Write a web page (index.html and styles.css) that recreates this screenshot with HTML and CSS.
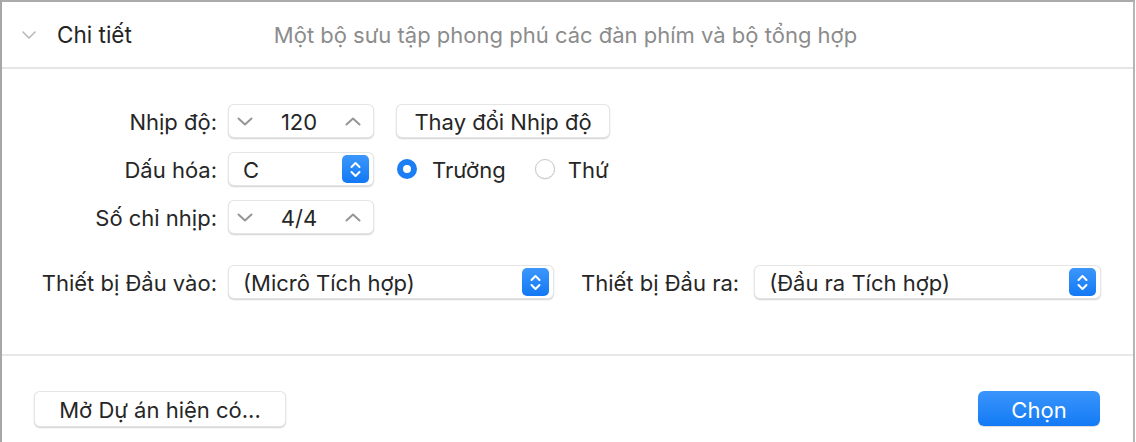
FILE: index.html
```html
<!DOCTYPE html>
<html lang="vi">
<head>
<meta charset="utf-8">
<link rel="stylesheet" href="styles.css">
</head>
<body>
<div class="window">
  <header class="header">
    <svg class="disclosure" width="14" height="8" viewBox="0 0 14 8"><path d="M1 1 L7 7 L13 1" fill="none" stroke="#b9b9b9" stroke-width="1.6" stroke-linecap="round" stroke-linejoin="round"/></svg>
    <span class="title">Chi tiết</span>
    <span class="desc">Một bộ sưu tập phong phú các đàn phím và bộ tổng hợp</span>
  </header>

  <section class="form">
    <div class="row">
      <label class="lbl">Nhịp độ:</label>
      <div class="stepper">
        <svg class="chev" width="16" height="9" viewBox="0 0 16 9"><path d="M1.5 1.5 L8 7.5 L14.5 1.5" fill="none" stroke="#959595" stroke-width="2" stroke-linecap="round" stroke-linejoin="round"/></svg>
        <span class="val">120</span>
        <svg class="chev" width="16" height="9" viewBox="0 0 16 9"><path d="M1.5 7.5 L8 1.5 L14.5 7.5" fill="none" stroke="#959595" stroke-width="2" stroke-linecap="round" stroke-linejoin="round"/></svg>
      </div>
      <button class="btn tempo">Thay đổi Nhịp độ</button>
    </div>

    <div class="row">
      <label class="lbl">Dấu hóa:</label>
      <div class="popup key">
        <span class="ptext">C</span>
        <span class="arrows"><svg width="11" height="17" viewBox="0 0 11 17"><path d="M1.5 6 L5.5 2 L9.5 6 M1.5 11 L5.5 15 L9.5 11" fill="none" stroke="#fff" stroke-width="2" stroke-linecap="round" stroke-linejoin="round"/></svg></span>
      </div>
      <div class="radios">
        <span class="radio on"></span><span class="rtext">Trưởng</span>
        <span class="radio off"></span><span class="rtext">Thứ</span>
      </div>
    </div>

    <div class="row">
      <label class="lbl">Số chỉ nhịp:</label>
      <div class="stepper">
        <svg class="chev" width="16" height="9" viewBox="0 0 16 9"><path d="M1.5 1.5 L8 7.5 L14.5 1.5" fill="none" stroke="#959595" stroke-width="2" stroke-linecap="round" stroke-linejoin="round"/></svg>
        <span class="val">4/4</span>
        <svg class="chev" width="16" height="9" viewBox="0 0 16 9"><path d="M1.5 7.5 L8 1.5 L14.5 7.5" fill="none" stroke="#959595" stroke-width="2" stroke-linecap="round" stroke-linejoin="round"/></svg>
      </div>
    </div>

    <div class="row devices">
      <label class="lbl">Thiết bị Đầu vào:</label>
      <div class="popup input">
        <span class="ptext">(Micrô Tích hợp)</span>
        <span class="arrows"><svg width="11" height="17" viewBox="0 0 11 17"><path d="M1.5 6 L5.5 2 L9.5 6 M1.5 11 L5.5 15 L9.5 11" fill="none" stroke="#fff" stroke-width="2" stroke-linecap="round" stroke-linejoin="round"/></svg></span>
      </div>
      <label class="lbl2">Thiết bị Đầu ra:</label>
      <div class="popup output">
        <span class="ptext">(Đầu ra Tích hợp)</span>
        <span class="arrows"><svg width="11" height="17" viewBox="0 0 11 17"><path d="M1.5 6 L5.5 2 L9.5 6 M1.5 11 L5.5 15 L9.5 11" fill="none" stroke="#fff" stroke-width="2" stroke-linecap="round" stroke-linejoin="round"/></svg></span>
      </div>
    </div>
  </section>

  <footer class="footer">
    <button class="btn open">Mở Dự án hiện có...</button>
    <button class="btn primary">Chọn</button>
  </footer>
</div>
</body>
</html>
```

FILE: styles.css
```css
* { box-sizing: border-box; }
html, body { margin: 0; padding: 0; background: #fff; }
body {
  font-family: Inter, "Noto Sans", "Liberation Sans", sans-serif;
  font-size: 22px;
  color: #262626;
}
.window {
  width: 1135px;
  height: 442px;
  border-top: 2px solid #ababab;
  border-left: 2px solid #a6a6a6;
  border-right: 2px solid #b5b5b5;
  background: #fff;
}
.header {
  height: 67px;
  border-bottom: 2px solid #e5e5e5;
  display: flex;
  align-items: center;
  padding-left: 20px;
}
.disclosure { flex: none; }
.title { margin-left: 21px; font-size: 22.5px; color: #242424; }
.desc { margin-left: 142px; font-size: 22px; color: #8c8c8c; }

.form {
  height: 287px;
  border-bottom: 2px solid #e8e8e8;
  padding-top: 35px;
  display: flex;
  flex-direction: column;
  gap: 14px;
}
.row { display: flex; align-items: center; height: 34px; }
.row.devices { margin-top: 17px; }
.lbl { width: 215px; text-align: right; margin-right: 11px; flex: none; white-space: nowrap; padding-top: 2px; }
.lbl2 { margin-left: 27px; margin-right: 15px; white-space: nowrap; padding-top: 2px; }

.stepper, .popup, .btn {
  background: #fff;
  border: 1px solid rgba(0,0,0,0.1);
  border-radius: 6px;
  box-shadow: 0 1px 1.5px rgba(0,0,0,0.18);
  height: 34px;
}
.stepper {
  width: 146px;
  display: flex;
  align-items: center;
  justify-content: space-between;
  padding: 0 12px 0 8px;
  flex: none;
}
.val { flex: 1; text-align: center; padding-top: 2px; }
.ptext { padding-top: 2px; }

.popup {
  display: flex;
  align-items: center;
  justify-content: space-between;
  padding: 0 4px 0 14px;
  flex: none;
}
.popup.key { width: 146px; }
.popup.input { width: 326px; }
.popup.output { width: 347px; }
.arrows {
  width: 27px; height: 28px;
  border-radius: 5px;
  background: linear-gradient(#3c97fb, #1278f4);
  display: flex; align-items: center; justify-content: center;
}

.btn {
  font-family: inherit;
  font-size: 22px;
  color: #262626;
  padding: 2px 0 0;
  cursor: default;
}
.btn.tempo { width: 214px; margin-left: 22px; }

.radios { display: flex; align-items: center; margin-left: 23px; }
.radio {
  width: 20px; height: 20px; border-radius: 50%;
  flex: none;
}
.radio.on { background: #fff; border: 6px solid #1b7ef5; }
.radio.off {
  background: #fff;
  border: 1px solid #c9c9c9;
  box-shadow: 0 0.5px 1px rgba(0,0,0,0.12);
  margin-left: 29px;
}
.rtext { margin-left: 15px; padding-top: 2px; }
.radio.off + .rtext { margin-left: 13px; }

.footer {
  display: flex;
  justify-content: space-between;
  padding: 35px 33px 0 32px;
}
.btn.open { width: 252px; height: 36px; }
.btn.primary {
  width: 122px;
  height: 35px;
  color: #fff;
  border: none;
  background: linear-gradient(#3a95fb, #137af5);
  box-shadow: 0 1px 1px rgba(0,0,0,0.15);
}
```
